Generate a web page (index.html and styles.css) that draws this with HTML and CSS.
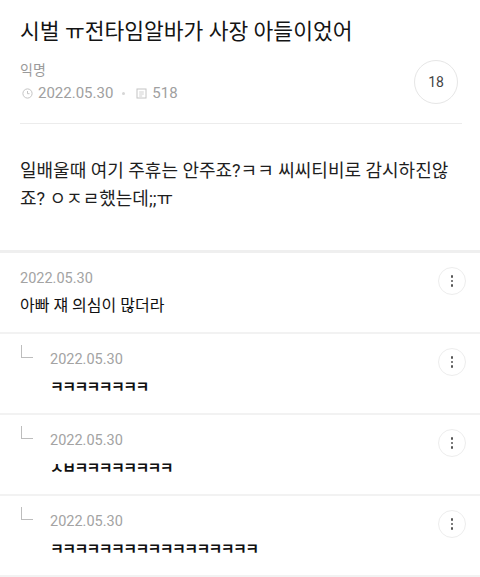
FILE: index.html
```html
<!DOCTYPE html>
<html lang="ko">
<head>
  <meta charset="UTF-8">
  <meta name="viewport" content="width=device-width, initial-scale=1.0">
  <title>게시글</title>
  <link rel="stylesheet" href="styles.css">
</head>
<body>
  <div class="post">
    <div class="post-head">
      <h1 class="title">시벌 ㅠ전타임알바가 사장 아들이었어</h1>
      <div class="info">
        <div class="author">
          <div class="name">익명</div>
          <div class="meta">
            <svg class="ico" width="11" height="11" viewBox="0 0 11 11"><circle cx="5.5" cy="5.5" r="4.6" fill="none" stroke="#c4c4c4" stroke-width="1"/><path d="M5.5 3v2.7h2" fill="none" stroke="#c4c4c4" stroke-width="1"/></svg>
            <span>2022.05.30</span>
            <span class="dot"></span>
            <svg class="ico" width="11" height="11" viewBox="0 0 11 11"><rect x="1" y="1" width="9" height="9" fill="none" stroke="#c4c4c4" stroke-width="1"/><path d="M3.2 4h4.6M3.2 6h4.6M3.2 8h3" stroke="#c4c4c4" stroke-width="0.8"/></svg>
            <span>518</span>
          </div>
        </div>
        <div class="count">18</div>
      </div>
    </div>

    <div class="post-body">
      일배울때 여기 주휴는 안주죠?ㅋㅋ 씨씨티비로 감시하진않죠? ㅇㅈㄹ했는데;;ㅠ
    </div>
  </div>

  <ul class="comments">
    <li class="comment">
      <div class="c-main">
        <div class="c-date">2022.05.30</div>
        <div class="c-text">아빠 쟤 의심이 많더라</div>
      </div>
      <button class="more"><span></span><span></span><span></span></button>
    </li>
    <li class="comment reply">
      <span class="reply-mark"></span>
      <div class="c-main">
        <div class="c-date">2022.05.30</div>
        <div class="c-text jamo">ㅋㅋㅋㅋㅋㅋㅋㅋ</div>
      </div>
      <button class="more"><span></span><span></span><span></span></button>
    </li>
    <li class="comment reply">
      <span class="reply-mark"></span>
      <div class="c-main">
        <div class="c-date">2022.05.30</div>
        <div class="c-text jamo">ㅅㅂㅋㅋㅋㅋㅋㅋㅋㅋ</div>
      </div>
      <button class="more"><span></span><span></span><span></span></button>
    </li>
    <li class="comment reply">
      <span class="reply-mark"></span>
      <div class="c-main">
        <div class="c-date">2022.05.30</div>
        <div class="c-text jamo">ㅋㅋㅋㅋㅋㅋㅋㅋㅋㅋㅋㅋㅋㅋㅋㅋㅋ</div>
      </div>
      <button class="more"><span></span><span></span><span></span></button>
    </li>
  </ul>
</body>
</html>
```

FILE: styles.css
```css
body {
  margin: 0;
  background: #fff;
  color: #222;
  font-family: Roboto, "Noto Sans CJK KR", sans-serif;
}
.post {
  border-bottom: 3px solid #efefef;
}
.post-head {
  margin: 0 18px 0 20px;
  padding-top: 18px;
  padding-bottom: 18px;
  border-bottom: 1px solid #ececec;
}
.title {
  margin: 0;
  font-size: 21.5px;
  line-height: 28px;
  font-weight: 400;
  color: #141414;
}
.info {
  display: flex;
  align-items: center;
  justify-content: space-between;
  margin-top: 13px;
}
.name {
  font-size: 14px;
  line-height: 22px;
  color: #9a9a9a;
}
.meta {
  display: flex;
  align-items: center;
  font-size: 15px;
  line-height: 24px;
  color: #a0a0a0;
}
.meta .ico {
  margin: 0 5px 0 2px;
}
.dot {
  width: 3px;
  height: 3px;
  border-radius: 50%;
  background: #d6d6d6;
  margin: 0 9px 0 9px;
}
.count {
  width: 42px;
  height: 42px;
  border: 1px solid #e6e6e6;
  border-radius: 50%;
  display: flex;
  align-items: center;
  justify-content: center;
  font-size: 14px;
  color: #444;
  margin-right: 4px;
}
.post-body {
  padding: 33px 20px 37px 20px;
  font-size: 18px;
  line-height: 28px;
  color: #1e1e1e;
}
.comments {
  list-style: none;
  margin: 0;
  padding: 0;
}
.comment {
  display: flex;
  align-items: flex-start;
  padding: 16px 14px 14px 20px;
  border-bottom: 2px solid #f2f2f2;
}
.c-main {
  flex: 1;
}
.c-date {
  font-size: 14.5px;
  line-height: 20px;
  color: #a3a3a3;
}
.c-text {
  margin-top: 5px;
  font-size: 16px;
  line-height: 24px;
  color: #111;
}
.c-text.jamo {
  font-size: 15px;
  letter-spacing: -1.6px;
  font-weight: 700;
}
.reply-mark {
  width: 11px;
  height: 12px;
  margin: -5px 17px 0 1px;
  border-left: 1px solid #bdbdbd;
  border-bottom: 1px solid #bdbdbd;
}
.more {
  width: 28px;
  height: 28px;
  margin-top: -2px;
  padding: 0;
  border: 1px solid #ededed;
  border-radius: 50%;
  background: #fff;
  display: flex;
  flex-direction: column;
  align-items: center;
  justify-content: center;
  gap: 2px;
}
.more span {
  width: 2.5px;
  height: 2.5px;
  border-radius: 50%;
  background: #555;
}
```
